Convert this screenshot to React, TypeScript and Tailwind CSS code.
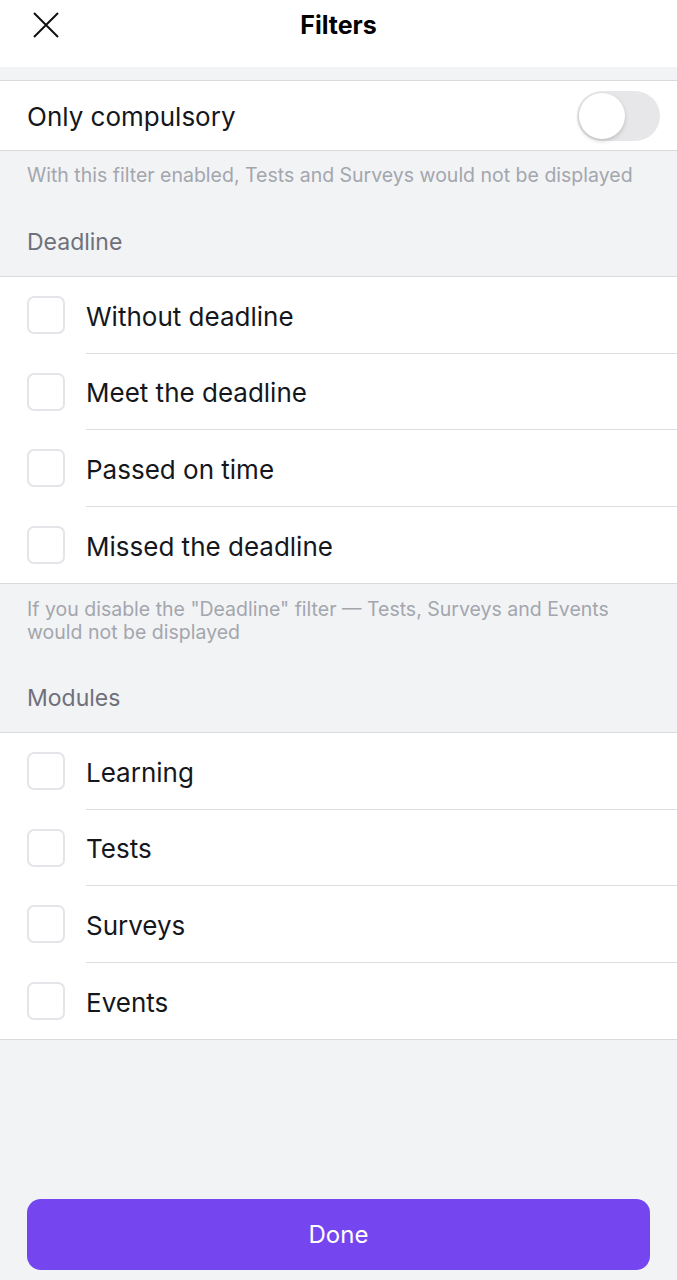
import { useState } from "react";

const deadlineOptions = [
  "Without deadline",
  "Meet the deadline",
  "Passed on time",
  "Missed the deadline",
];

const moduleOptions = ["Learning", "Tests", "Surveys", "Events"];

function CheckRow({ label, last }: { label: string; last: boolean }) {
  const [checked, setChecked] = useState(false);
  return (
    <button
      onClick={() => setChecked(!checked)}
      className="flex h-[76.5px] w-full items-center pl-[27px] text-left"
    >
      <span
        className={
          "h-[38px] w-[38px] shrink-0 rounded-[7px] border-2 " +
          (checked ? "border-[#7546f0] bg-[#7546f0]" : "border-[#e4e5e8] bg-white")
        }
      />
      <span
        className={
          "ml-[21px] flex h-full flex-1 items-center pt-[3px] text-[26px] text-[#15171c] " +
          (last ? "" : "border-b border-[#dcdde0]")
        }
      >
        {label}
      </span>
    </button>
  );
}

function Group({ items }: { items: string[] }) {
  return (
    <div className="border-y border-[#d9dadd] bg-white">
      {items.map((item, i) => (
        <CheckRow key={item} label={item} last={i === items.length - 1} />
      ))}
    </div>
  );
}

export default function App() {
  const [compulsory, setCompulsory] = useState(false);

  return (
    <div className="flex min-h-[1280px] w-full flex-col bg-[#f2f3f5] font-['Inter',sans-serif]">
      <header className="relative flex h-[67px] items-start justify-center bg-white">
        <button className="absolute left-[31px] top-[10px] p-[2px]">
          <svg width="26" height="26" viewBox="0 0 26 26" fill="none" stroke="#111" strokeWidth="2">
            <path d="M1 1l24 24M25 1L1 25" />
          </svg>
        </button>
        <h1 className="mt-[7px] text-[25px] font-bold leading-[36px] text-black">Filters</h1>
      </header>

      <div className="mt-[13px] flex h-[71px] items-center justify-between border-y border-[#d9dadd] bg-white pl-[27px] pr-[17px]">
        <span className="pt-[1px] text-[26px] text-[#15171c]">Only compulsory</span>
        <button
          onClick={() => setCompulsory(!compulsory)}
          className={
            "flex h-[50px] w-[83px] items-center rounded-full p-[2px] " +
            (compulsory ? "justify-end bg-[#7546f0]" : "justify-start bg-[#e7e7ea]")
          }
        >
          <span className="h-[46px] w-[46px] rounded-full bg-white shadow-[0_2px_4px_rgba(0,0,0,0.18)]" />
        </button>
      </div>

      <div className="px-[27px] pb-[20px] pt-[13px]">
        <p className="text-[19.5px] leading-[23px] text-[#a3a6ad]">
          With this filter enabled, Tests and Surveys would not be displayed
        </p>
        <h2 className="mt-[42px] text-[23px] leading-[27px] text-[#6e717a]">Deadline</h2>
      </div>

      <Group items={deadlineOptions} />

      <div className="px-[27px] pb-[20px] pt-[14px]">
        <p className="pr-[20px] text-[19.5px] leading-[23px] text-[#a3a6ad]">
          If you disable the "Deadline" filter — Tests, Surveys and Events would not be displayed
        </p>
        <h2 className="mt-[41px] text-[23px] leading-[27px] text-[#6e717a]">Modules</h2>
      </div>

      <Group items={moduleOptions} />

      <div className="mt-auto px-[27px] pb-[10px]">
        <button className="flex h-[71px] w-full items-center justify-center rounded-[14px] bg-[#7546f0] text-[24px] text-white">
          Done
        </button>
      </div>
    </div>
  );
}
